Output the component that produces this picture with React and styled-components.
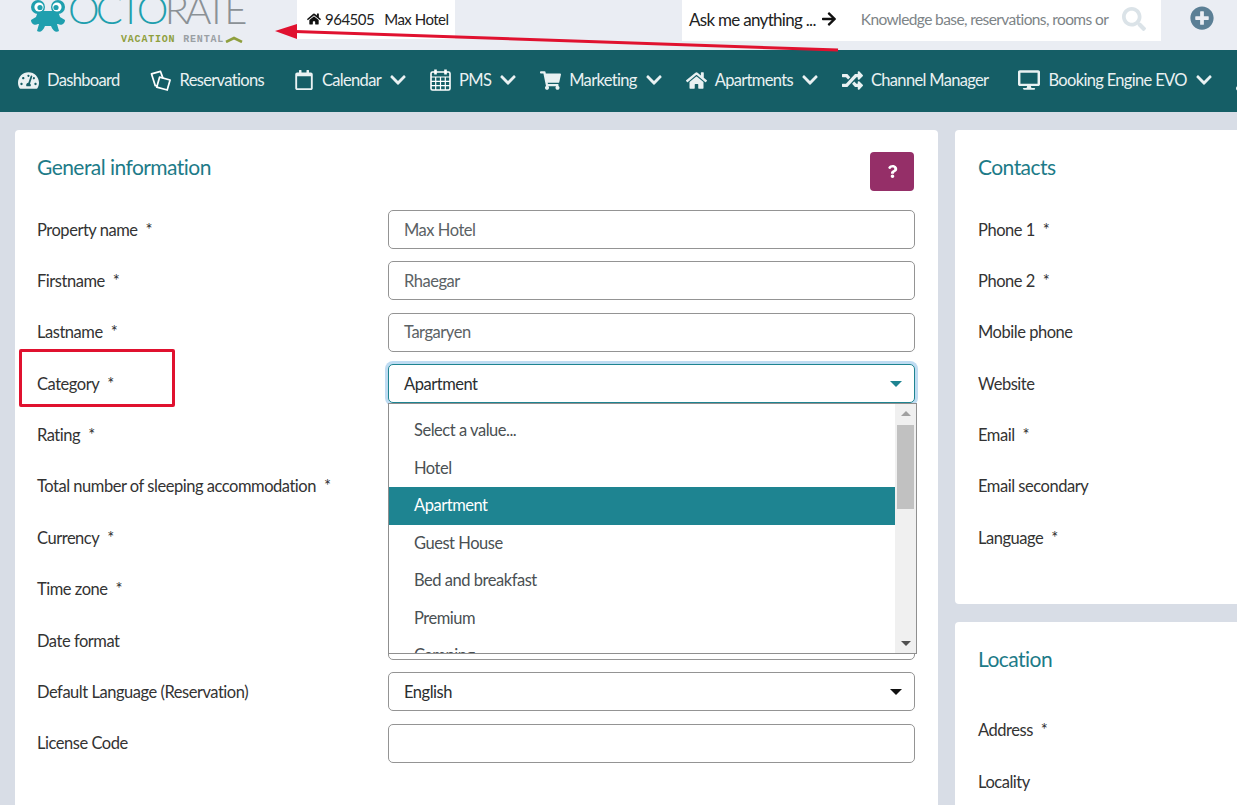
import styled, { createGlobalStyle } from 'styled-components';
import {
  FaTachometerAlt, FaRegCalendar, FaShoppingCart, FaHome, FaRandom, FaDesktop,
  FaChevronDown, FaArrowRight, FaSearch, FaPlusCircle, FaQuestion, FaWrench,
} from 'react-icons/fa';

const GlobalStyle = createGlobalStyle`
  html, body {
    margin: 0;
    padding: 0;
    height: 100%;
    overflow: hidden;
  }
  body {
    font-family: Lato, "Liberation Sans", sans-serif;
    background: #d8dde6;
    color: #333;
  }
  * { box-sizing: border-box; }
`;

function ReservationsIcon() {
  return (
    <svg width="22" height="21" viewBox="0 0 23 22" fill="none" stroke="#fff" strokeWidth="1.8" strokeLinejoin="round">
      <path d="M8 16.5L5.5 16.5L1.5 4L11 1.5L13.5 8.5" />
      <path d="M10 7.5L21 10.5L18 21L7 18z" />
    </svg>
  );
}

function GridCalendarIcon() {
  return (
    <svg width="21" height="22" viewBox="0 0 21 22" fill="none" stroke="#fff">
      <rect x="1" y="3" width="19" height="18" rx="1.5" strokeWidth="1.6" />
      <path d="M1 8h19M1 12.3h19M1 16.6h19M5.7 8v13M10.5 8v13M15.3 8v13" strokeWidth="1.2" />
      <path d="M5.5 0.5v5M15.5 0.5v5" strokeWidth="2.6" />
    </svg>
  );
}

function LogoMark() {
  return (
    <svg width="34" height="33" viewBox="0 0 34 33">
      <g fill="#1f9fae">
        <circle cx="7" cy="7" r="7" />
        <circle cx="27" cy="7" r="7" />
        <path d="M7 11h20l2 6 5 3c0 4-4 6-7 4l-1 0 2 7c-3 2-6 0-8-5h-6c-2 5-5 7-8 5l2-7-1 0c-3 2-7 0-7-4l5-3z" />
      </g>
      <circle cx="8" cy="7" r="4.6" fill="#fff" />
      <circle cx="26" cy="7" r="4.6" fill="#fff" />
      <circle cx="9" cy="7.5" r="2.6" fill="#1f9fae" />
      <circle cx="25" cy="7.5" r="2.6" fill="#1f9fae" />
    </svg>
  );
}

const navItems = [
  { label: 'Dashboard', icon: <FaTachometerAlt size={21} /> },
  { label: 'Reservations', icon: <ReservationsIcon /> },
  { label: 'Calendar', icon: <FaRegCalendar size={20} />, caret: true },
  { label: 'PMS', icon: <GridCalendarIcon />, caret: true },
  { label: 'Marketing', icon: <FaShoppingCart size={21} />, caret: true },
  { label: 'Apartments', icon: <FaHome size={21} />, caret: true },
  { label: 'Channel Manager', icon: <FaRandom size={21} /> },
  { label: 'Booking Engine EVO', icon: <FaDesktop size={22} />, caret: true },
  { icon: <FaWrench size={21} /> },
];

const leftFields = [
  { label: 'Property name', req: true, value: 'Max Hotel' },
  { label: 'Firstname', req: true, value: 'Rhaegar' },
  { label: 'Lastname', req: true, value: 'Targaryen' },
  { label: 'Category', req: true, value: 'Apartment', open: true },
  { label: 'Rating', req: true, value: '' },
  { label: 'Total number of sleeping accommodation', req: true, value: '' },
  { label: 'Currency', req: true, value: '' },
  { label: 'Time zone', req: true, value: '' },
  { label: 'Date format', value: '' },
  { label: 'Default Language (Reservation)', value: 'English', select: true },
  { label: 'License Code', value: '' },
];

const contacts = [
  { label: 'Phone 1', req: true },
  { label: 'Phone 2', req: true },
  { label: 'Mobile phone' },
  { label: 'Website' },
  { label: 'Email', req: true },
  { label: 'Email secondary' },
  { label: 'Language', req: true },
];

const options = ['Select a value...', 'Hotel', 'Apartment', 'Guest House', 'Bed and breakfast', 'Premium', 'Camping'];

export default function App() {
  return (
    <Page>
      <GlobalStyle />
      <Header>
        <Logo>
          <LogoTop>
            <LogoMark />
            <LogoWord>
              <span>OCTO</span><b>RATE</b>
            </LogoWord>
          </LogoTop>
          <LogoSub>
            <em>VACATION</em> RENTAL
            <svg width="18" height="7" viewBox="0 0 18 7" fill="none" stroke="#8f9f3e" strokeWidth="2.6"><path d="M1 6l8-4 8 4" /></svg>
          </LogoSub>
        </Logo>
        <PropertyTag>
          <FaHome size={14} color="#111" />
          <span>964505</span>
          <span>Max Hotel</span>
        </PropertyTag>
        <AskBox>
          <AskLabel>Ask me anything ...</AskLabel>
          <FaArrowRight size={16} color="#111" />
          <AskHint>Knowledge base, reservations, rooms or</AskHint>
          <FaSearch size={24} color="#dbe3e8" />
        </AskBox>
        <AddButton><FaPlusCircle size={24} color="#5b7f95" /></AddButton>
      </Header>

      <Nav>
        {navItems.map((item, i) => (
          <NavItem key={i}>
            {item.icon}
            {item.label && <span>{item.label}</span>}
            {item.caret && <NavCaret><FaChevronDown size={18} /></NavCaret>}
          </NavItem>
        ))}
      </Nav>

      <Content>
        <Card>
          <CardHead>
            <CardTitle>General information</CardTitle>
            <HelpButton><FaQuestion size={13} /></HelpButton>
          </CardHead>
          {leftFields.map((f) => (
            <Row key={f.label}>
              <Label>{f.label}{f.req && <Star>*</Star>}</Label>
              {f.open ? (
                <OpenSelectWrap>
                  <Control $focused>
                    <span>{f.value}</span>
                    <Caret $color="#1e8491" />
                  </Control>
                  <Dropdown>
                    <OptionList>
                      {options.map((o) => (
                        <Option key={o} $active={o === 'Apartment'}>{o}</Option>
                      ))}
                    </OptionList>
                    <ScrollBar>
                      <ScrollArrow $up />
                      <ScrollThumb />
                      <ScrollArrow />
                    </ScrollBar>
                  </Dropdown>
                </OpenSelectWrap>
              ) : (
                <Control $muted={!f.select}>
                  <span>{f.value}</span>
                  {f.select && <Caret $color="#111" />}
                </Control>
              )}
            </Row>
          ))}
        </Card>

        <SideColumn>
          <SideCard>
            <CardHead>
              <CardTitle>Contacts</CardTitle>
            </CardHead>
            {contacts.map((c) => (
              <Row key={c.label}>
                <Label>{c.label}{c.req && <Star>*</Star>}</Label>
              </Row>
            ))}
          </SideCard>
          <LocationCard>
            <CardTitle>Location</CardTitle>
            <LocationRows>
              <Label>Address<Star>*</Star></Label>
              <Label>Locality</Label>
            </LocationRows>
          </LocationCard>
        </SideColumn>
      </Content>

      <CategoryMark />
      <ArrowMark width="565" height="52" viewBox="0 0 565 52">
        <path d="M20 31.5L563 50" stroke="#e0112f" strokeWidth="3" fill="none" />
        <path d="M0 31L22 24L22 39z" fill="#e0112f" />
      </ArrowMark>
    </Page>
  );
}

const Page = styled.div`
  position: relative;
  width: 1237px;
  height: 805px;
  overflow: hidden;
  background: #d8dde6;
`;

const Header = styled.header`
  display: flex;
  align-items: flex-start;
  height: 50px;
  background: #eaedf3;
  padding-left: 31px;
  overflow: hidden;
`;

const Logo = styled.div`
  display: flex;
  flex-direction: column;
  width: 266px;
`;

const LogoTop = styled.div`
  display: flex;
  align-items: flex-start;
  gap: 3px;
  height: 33px;
  overflow: hidden;
`;

const LogoWord = styled.div`
  margin-top: -9px;
  font-weight: 300;
  font-size: 40px;
  line-height: 36px;
  letter-spacing: -3.8px;
  color: #1f9fae;
  white-space: nowrap;

  b {
    font-weight: 300;
    color: #8b9196;
  }
`;

const LogoSub = styled.div`
  display: flex;
  align-items: center;
  gap: 1px;
  margin: 1px 0 0 90px;
  font-family: "Liberation Mono", monospace;
  font-size: 10px;
  font-weight: 700;
  letter-spacing: 0.8px;
  color: #9aa0a4;
  white-space: pre;

  em {
    font-style: normal;
    color: #8f9f3e;
  }
`;

const PropertyTag = styled.div`
  display: flex;
  align-items: center;
  gap: 4px;
  height: 39px;
  width: 158px;
  flex-shrink: 0;
  background: #fff;
  padding: 0 0 1px 10px;
  font-size: 15px;
  letter-spacing: -0.5px;
  color: #222;
  white-space: nowrap;

  span + span {
    margin-left: 6px;
  }
`;

const AskBox = styled.div`
  display: flex;
  align-items: center;
  flex-shrink: 0;
  height: 41px;
  width: 479px;
  margin-left: 227px;
  background: #fff;
  padding: 0 0 3px 7px;
`;

const AskLabel = styled.span`
  font-size: 17px;
  letter-spacing: -0.7px;
  color: #222;
  margin-right: 5px;
  white-space: nowrap;
`;

const AskHint = styled.span`
  font-size: 15.5px;
  letter-spacing: -0.6px;
  color: #7d8487;
  margin: 0 14px 0 24px;
  white-space: nowrap;
`;

const AddButton = styled.div`
  display: flex;
  margin: 6px 0 0 29px;
`;

const Nav = styled.nav`
  display: flex;
  align-items: center;
  gap: 30px;
  height: 62px;
  background: #155e66;
  padding: 0 0 2px 18px;
  overflow: hidden;
`;

const NavItem = styled.div`
  display: flex;
  align-items: center;
  gap: 8px;
  flex-shrink: 0;
  color: #e9f1f2;
  font-size: 16.5px;
  letter-spacing: -0.67px;
  white-space: nowrap;
`;

const NavCaret = styled.span`
  display: flex;
  margin-right: -7px;
`;

const Content = styled.main`
  display: flex;
  align-items: flex-start;
  gap: 17px;
  padding: 18px 0 0 15px;
  width: 1300px;
`;

const Card = styled.section`
  width: 923px;
  height: 700px;
  flex-shrink: 0;
  background: #fff;
  border-radius: 4px;
  padding: 22px 23px 0 22px;
`;

const CardHead = styled.div`
  display: flex;
  justify-content: space-between;
  align-items: flex-start;
  height: 58px;
`;

const CardTitle = styled.h2`
  margin: 0;
  padding-top: 1px;
  font-size: 21px;
  font-weight: 400;
  line-height: 28px;
  letter-spacing: -0.55px;
  color: #1d7b88;
`;

const HelpButton = styled.button`
  display: flex;
  align-items: center;
  justify-content: center;
  width: 44px;
  height: 39px;
  margin-right: 1px;
  border: 0;
  border-radius: 4px;
  background: #952f68;
  color: #fff;
`;

const Row = styled.div`
  display: flex;
  align-items: center;
  height: 39px;
  margin-bottom: 12.38px;
`;

const Label = styled.label`
  width: 351px;
  flex-shrink: 0;
  font-size: 16.5px;
  letter-spacing: -0.47px;
  color: #333;
`;

const Star = styled.span`
  margin-left: 8px;
`;

const Control = styled.div`
  display: flex;
  align-items: center;
  justify-content: space-between;
  width: 527px;
  height: 39px;
  padding: 0 12px 0 15px;
  background: #fff;
  border: 1px solid ${(p) => (p.$focused ? '#1e8491' : '#949494')};
  border-radius: 5px;
  font-size: 16.5px;
  letter-spacing: -0.47px;
  color: ${(p) => (p.$muted ? '#5b6265' : '#2a2e30')};
  box-shadow: ${(p) => (p.$focused ? '0 0 0 3px #bfdcf2' : 'none')};
`;

const Caret = styled.i`
  width: 0;
  height: 0;
  border-left: 6px solid transparent;
  border-right: 6px solid transparent;
  border-top: 6px solid ${(p) => p.$color};
`;

const OpenSelectWrap = styled.div`
  position: relative;
`;

const Dropdown = styled.div`
  position: absolute;
  top: 39px;
  left: 0;
  z-index: 2;
  display: flex;
  width: 529px;
  height: 251px;
  background: #fff;
  border: 1px solid #8f8f8f;
  overflow: hidden;
`;

const OptionList = styled.div`
  flex: 1;
  padding-top: 8px;
`;

const Option = styled.div`
  height: 37.5px;
  line-height: 37px;
  padding-left: 25px;
  font-size: 16.5px;
  letter-spacing: -0.47px;
  color: ${(p) => (p.$active ? '#fff' : '#4a5053')};
  background: ${(p) => (p.$active ? '#1e8491' : 'transparent')};
`;

const ScrollBar = styled.div`
  display: flex;
  flex-direction: column;
  width: 21px;
  flex-shrink: 0;
  background: #f0f0f0;
`;

const ScrollArrow = styled.div`
  width: 0;
  height: 0;
  margin: ${(p) => (p.$up ? '7px auto 6px' : 'auto auto 7px')};
  border-left: 5px solid transparent;
  border-right: 5px solid transparent;
  ${(p) => (p.$up ? 'border-bottom: 5px solid #a0a0a0;' : 'border-top: 5px solid #505050;')}
`;

const ScrollThumb = styled.div`
  height: 84px;
  margin: 3px 2px 0;
  background: #c1c1c1;
`;

const SideColumn = styled.div`
  display: flex;
  flex-direction: column;
  gap: 18px;
  width: 320px;
  flex-shrink: 0;
`;

const SideCard = styled.section`
  height: 474px;
  background: #fff;
  border-radius: 4px;
  padding: 22px 0 0 23px;
`;

const LocationCard = styled.section`
  height: 300px;
  background: #fff;
  border-radius: 4px;
  padding: 22px 0 0 23px;
`;

const LocationRows = styled.div`
  display: flex;
  flex-direction: column;
  gap: 32px;
  padding-top: 47px;
`;

const CategoryMark = styled.div`
  position: absolute;
  left: 19px;
  top: 349px;
  width: 156px;
  height: 58px;
  border: 3px solid #e0112f;
  border-radius: 2px;
`;

const ArrowMark = styled.svg`
  position: absolute;
  left: 275px;
  top: 0;
`;
